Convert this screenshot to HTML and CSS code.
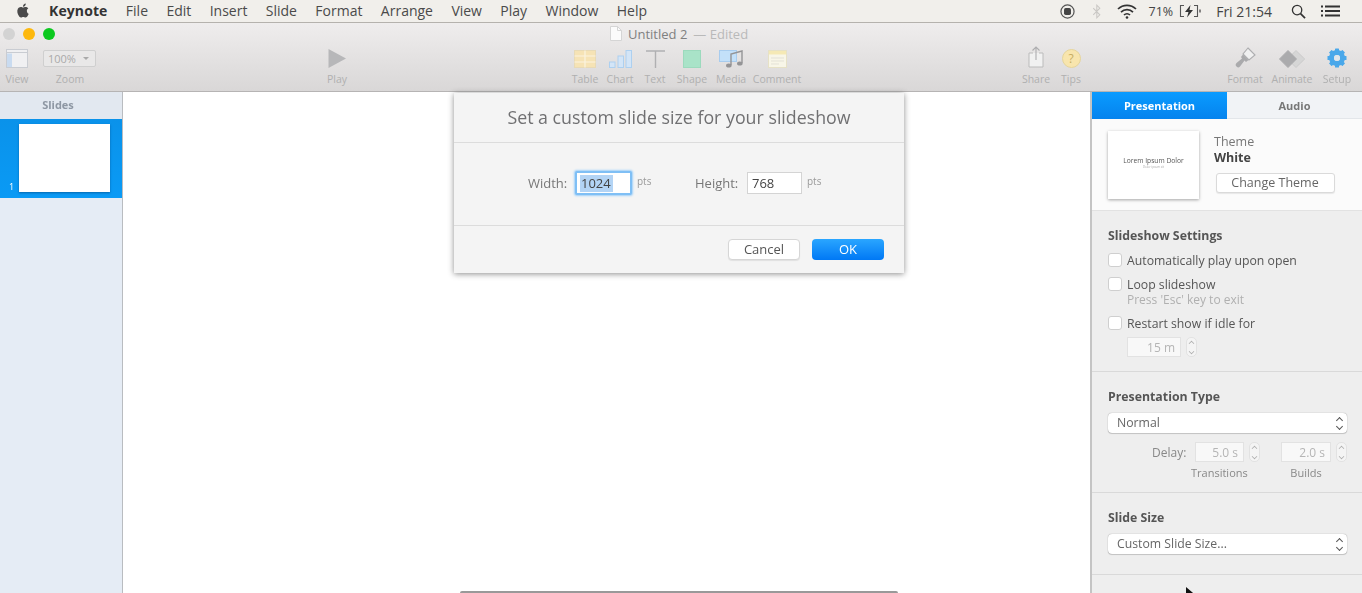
FILE: index.html
```html
<!DOCTYPE html>
<html lang="en">
<head>
<meta charset="utf-8">
<title>Keynote</title>
<link rel="stylesheet" href="styles.css">
</head>
<body>
<div class="screen">
  <header class="menubar">
    <svg class="apple" viewBox="0 0 24 24"><path d="M12.152 6.896c-.948 0-2.415-1.078-3.96-1.04-2.04.027-3.91 1.183-4.961 3.014-2.117 3.675-.546 9.103 1.519 12.09 1.013 1.454 2.208 3.09 3.792 3.039 1.52-.065 2.09-.987 3.935-.987 1.831 0 2.35.987 3.96.948 1.637-.026 2.676-1.48 3.676-2.948 1.156-1.688 1.636-3.325 1.662-3.415-.039-.013-3.182-1.221-3.22-4.857-.026-3.04 2.48-4.494 2.597-4.559-1.429-2.09-3.623-2.324-4.39-2.376-2-.156-3.675 1.09-4.61 1.09zM15.53 3.83c.843-1.012 1.4-2.427 1.245-3.83-1.207.052-2.662.805-3.532 1.818-.78.896-1.454 2.338-1.273 3.714 1.338.104 2.715-.688 3.559-1.701"/></svg>
    <nav class="menu">
      <span class="menu-app">Keynote</span><span>File</span><span>Edit</span><span>Insert</span><span>Slide</span><span>Format</span><span>Arrange</span><span>View</span><span>Play</span><span>Window</span><span>Help</span>
    </nav>
    <div class="status">
      <svg class="st-record" viewBox="0 0 16 16"><circle cx="8" cy="8" r="7" fill="none" stroke="#555" stroke-width="1.300"/><rect x="4.300" y="4.300" width="7.400" height="7.400" rx="1.800" fill="#444"/></svg>
      <svg class="st-bt" viewBox="0 0 10 16"><path d="M1 4.500l7 7-3.200 3.200V1.300L8 4.500l-7 7" fill="none" stroke="#c9c7c4" stroke-width="1.100"/></svg>
      <svg class="st-wifi" viewBox="0 0 20 15"><g fill="none" stroke="#333" stroke-width="1.700"><path d="M1 5a13 13 0 0 1 18 0"/><path d="M4 8.200a8.500 8.500 0 0 1 12 0"/><path d="M7 11a4.200 4.200 0 0 1 6 0"/></g><circle cx="10" cy="13.500" r="1.300" fill="#333"/></svg>
      <span class="st-pct">71%</span>
      <svg class="st-batt" viewBox="0 0 22 14"><path d="M5 1.500H1.500v11H5M15 1.500h3.500v11H15" fill="none" stroke="#555" stroke-width="1.100"/><path d="M21 5.500v3" stroke="#555" stroke-width="1.400"/><path d="M11.500 1L6 8h3.500l-1.500 5.500L14 6h-3.500z" fill="#333"/></svg>
      <span class="st-time">Fri 21:54</span>
      <svg class="st-search" viewBox="0 0 16 16"><circle cx="6.500" cy="6.500" r="5" fill="none" stroke="#333" stroke-width="1.400"/><path d="M10.200 10.200L15 15" stroke="#333" stroke-width="1.800"/></svg>
      <svg class="st-list" viewBox="0 0 19 12"><g fill="#333"><rect x="0" y="0.500" width="2" height="2"/><rect x="0" y="5" width="2" height="2"/><rect x="0" y="9.500" width="2" height="2"/><rect x="4" y="0.500" width="15" height="2"/><rect x="4" y="5" width="15" height="2"/><rect x="4" y="9.500" width="15" height="2"/></g></svg>
    </div>
  </header>

  <section class="toolbar">
    <div class="titlerow">
      <div class="lights"><i class="light l-off"></i><i class="light l-min"></i><i class="light l-max"></i></div>
      <div class="doc">
        <svg class="doc-icon" viewBox="0 0 12 15"><path d="M.5.500h7l4 4v10H.5z" fill="#fbfbfb" stroke="#d5d5d5"/><path d="M7.500.500v4h4" fill="none" stroke="#d5d5d5"/></svg>
        <span class="doc-name">Untitled 2</span><span class="doc-state">— Edited</span>
      </div>
    </div>
    <div class="tools">
      <div class="tool w-view">
        <svg class="ico" width="22" height="19" viewBox="0 0 22 19"><rect x=".5" y=".5" width="21" height="18" fill="#f0f0f2" stroke="#c9ccd2"/><rect x="1" y="4.500" width="5" height="13.500" fill="#c9dbf0"/><path d="M1 3.500h20" stroke="#c9ccd2"/></svg>
        <span>View</span>
      </div>
      <div class="tool w-zoom">
        <div class="zoombox"><span class="zoomval">100%</span><i class="zoomcaret"></i></div>
        <span>Zoom</span>
      </div>
      <div class="tool w-play">
        <svg class="ico" width="18" height="19" viewBox="0 0 18 19"><path d="M.5 0L18 9.500.5 19z" fill="#b7b7b9"/></svg>
        <span>Play</span>
      </div>
      <div class="tool w-table">
        <svg class="ico" width="22" height="18" viewBox="0 0 22 18"><rect x=".5" y=".5" width="21" height="17" fill="#f6e3b5" stroke="#e8dab6"/><path d="M.5 6h21M.5 12h21M11 .5v17" stroke="#fbf3df" stroke-width="1.200"/></svg>
        <span>Table</span>
      </div>
      <div class="tool w-chart">
        <svg class="ico" width="23" height="18" viewBox="0 0 23 18"><g fill="#d3e5f7" stroke="#add0f0"><rect x=".5" y="12" width="5.500" height="5.500"/><rect x="9" y="6" width="5.500" height="11.500"/><rect x="17" y=".5" width="5.500" height="17"/></g></svg>
        <span>Chart</span>
      </div>
      <div class="tool w-text">
        <svg class="ico" width="19" height="18" viewBox="0 0 19 18"><path d="M0 1h19M9.500 1v17" fill="none" stroke="#b0b0b2" stroke-width="1.400"/></svg>
        <span>Text</span>
      </div>
      <div class="tool w-shape">
        <svg class="ico" width="18" height="18" viewBox="0 0 18 18"><rect x=".5" y=".5" width="17" height="17" fill="#a9e3c8" stroke="#9cdabd"/></svg>
        <span>Shape</span>
      </div>
      <div class="tool w-media">
        <svg class="ico" width="25" height="18" viewBox="0 0 25 18"><rect x=".5" y=".5" width="17" height="11" fill="#c3e0f9" stroke="#a8ccee"/><path d="M12 15V4l11-3v12" fill="none" stroke="#949496" stroke-width="1.400"/><ellipse cx="9.800" cy="15.500" rx="2.800" ry="2" fill="#949496"/><ellipse cx="20.800" cy="13.500" rx="2.800" ry="2" fill="#949496"/></svg>
        <span>Media</span>
      </div>
      <div class="tool w-comment">
        <svg class="ico" width="19" height="18" viewBox="0 0 19 18"><rect x=".5" y=".5" width="18" height="17" fill="#f8f6e8" stroke="#e6e1c6"/><rect x="1" y="1" width="17" height="3.500" fill="#f5e9b5"/><path d="M3 8h13M3 11h13M3 14h8" stroke="#e3e1d6"/></svg>
        <span>Comment</span>
      </div>
      <div class="tool w-share">
        <svg class="ico" width="16" height="22" viewBox="0 0 16 22"><path d="M5 7H1v14h14V7h-4" fill="#f1f1f1" stroke="#bbb"/><path d="M8 14V1M4.500 4.500L8 1l3.500 3.500" fill="none" stroke="#adadaf" stroke-width="1.100"/></svg>
        <span>Share</span>
      </div>
      <div class="tool w-tips">
        <div class="tipsdot">?</div>
        <span>Tips</span>
      </div>
      <div class="tool w-format">
        <svg class="ico" width="21" height="21" viewBox="0 0 21 21"><path d="M13 1l7 7-6 5-6-6z" fill="#f0f0f0" stroke="#aeaeb0" stroke-width="1.100"/><path d="M8 7.500l5.500 5.500-2.500 2-1.500-1.500L5 19.500a2 2 0 0 1-3.500-3.500L7 11.500 6 10z" fill="#aaaaac"/></svg>
        <span>Format</span>
      </div>
      <div class="tool w-animate">
        <svg class="ico" width="28" height="18" viewBox="0 0 28 18"><path d="M18 .5L26.700 9 18 17.500 9.300 9z" fill="#d6d6d6" stroke="#c8c8c8" stroke-width=".8" stroke-linejoin="round"/><path d="M10 .5L18.500 9 10 17.500 1.500 9z" fill="#ababad" stroke="#ababad" stroke-linejoin="round"/></svg>
        <span>Animate</span>
      </div>
      <div class="tool w-setup">
        <svg class="ico" width="20" height="20" viewBox="0 0 20 20"><g fill="#4aa8ea"><circle cx="10" cy="10" r="5.500" fill="none" stroke="#4aa8ea" stroke-width="5"/><rect x="8" y="0.500" width="4" height="4" rx=".6"/><rect x="8" y="15.500" width="4" height="4" rx=".6"/><rect x="0.500" y="8" width="4" height="4" rx=".6"/><rect x="15.500" y="8" width="4" height="4" rx=".6"/><rect x="8" y="0.500" width="4" height="4" rx=".6" transform="rotate(45 10 10)"/><rect x="8" y="15.500" width="4" height="4" rx=".6" transform="rotate(45 10 10)"/><rect x="0.500" y="8" width="4" height="4" rx=".6" transform="rotate(45 10 10)"/><rect x="15.500" y="8" width="4" height="4" rx=".6" transform="rotate(45 10 10)"/></g><circle cx="10" cy="10" r="3" fill="#dfe6ec"/></svg>
        <span>Setup</span>
      </div>
    </div>
  </section>

  <main class="workspace">
    <aside class="slides">
      <div class="slides-head">Slides</div>
      <div class="slide-row"><span class="slide-num">1</span><div class="slide-thumb"></div></div>
    </aside>

    <section class="canvas">
      <div class="canvas-slide"></div>
      <div class="dialog">
        <h1 class="dialog-title">Set a custom slide size for your slideshow</h1>
        <div class="dialog-body">
          <label class="dlg-label">Width:</label>
          <div class="dlg-input focused"><span class="sel">1024</span></div>
          <span class="pts">pts</span>
          <label class="dlg-label second">Height:</label>
          <div class="dlg-input plain">768</div>
          <span class="pts">pts</span>
        </div>
        <div class="dialog-foot">
          <button class="btn-cancel">Cancel</button>
          <button class="btn-ok">OK</button>
        </div>
      </div>
    </section>

    <aside class="inspector">
      <div class="tabs"><div class="tab active">Presentation</div><div class="tab">Audio</div></div>
      <div class="theme">
        <div class="theme-thumb"><span class="lorem">Lorem Ipsum Dolor</span><span class="lorem-sub">Dolor ipsum sit</span></div>
        <div class="theme-info">
          <div class="theme-label">Theme</div>
          <div class="theme-name">White</div>
          <button class="theme-btn">Change Theme</button>
        </div>
      </div>
      <div class="panel p-show">
        <h2>Slideshow Settings</h2>
        <div class="check"><i class="box"></i>Automatically play upon open</div>
        <div class="check"><i class="box"></i>Loop slideshow</div>
        <div class="hint">Press 'Esc' key to exit</div>
        <div class="check"><i class="box"></i>Restart show if idle for</div>
        <div class="idle"><div class="num n-idle">15 m</div><div class="stepper"><b></b><u></u></div></div>
      </div>
      <div class="panel p-type">
        <h2>Presentation Type</h2>
        <div class="select">Normal<span class="arrows"><b></b><u></u></span></div>
        <div class="delay">
          <span class="delay-label">Delay:</span>
          <div class="num n-del">5.0 s</div><div class="stepper"><b></b><u></u></div>
          <div class="num n-del n-b">2.0 s</div><div class="stepper"><b></b><u></u></div>
        </div>
        <div class="captions"><span class="cap-t">Transitions</span><span class="cap-b">Builds</span></div>
      </div>
      <div class="panel p-size">
        <h2>Slide Size</h2>
        <div class="select">Custom Slide Size...<span class="arrows"><b></b><u></u></span></div>
      </div>
    </aside>
  </main>
  <svg class="cursor" width="12" height="12" viewBox="0 0 12 12"><path d="M0 0v12l3-3 2.500 3h3L6 8.500h4z" fill="#111"/></svg>
</div>
</body>
</html>
```
FILE: styles.css
```css
* { box-sizing: border-box; }
html, body { margin: 0; padding: 0; height: 593px; overflow: hidden; background: #fff; }
.screen {
  position: relative; width: 1362px; height: 593px; overflow: hidden;
  font-family: "Open Sans", "Noto Sans", sans-serif; color: #444;
  filter: blur(0.5px);
  display: flex; flex-direction: column;
}
svg { display: block; flex: none; }

/* menu bar */
.menubar {
  height: 23px; flex: none; display: flex; align-items: center;
  background: #f1efeb; border-bottom: 1px solid #b5b2ad;
  font-size: 14px; color: #4a4a4a; padding-left: 16px;
}
.apple { width: 14px; height: 15px; fill: #4a4a4a; margin-top: -1px; }
.menu { display: flex; gap: 18.4px; margin-left: 19px; line-height: 22px; }
.menu-app { font-weight: 700; color: #333; letter-spacing: .1px; }
.status { margin-left: auto; display: flex; align-items: center; color: #444; padding-right: 22px; }
.st-record { width: 15px; height: 15px; }
.st-bt { width: 10px; height: 15px; margin-left: 17px; }
.st-wifi { width: 20px; height: 15px; margin-left: 15px; }
.st-pct { font-size: 12.5px; margin-left: 12px; }
.st-batt { width: 22px; height: 14px; margin-left: 6px; }
.st-time { font-size: 14px; margin-left: 15px; }
.st-search { width: 15px; height: 15px; margin-left: 19px; }
.st-list { width: 19px; height: 12px; margin-left: 15px; }

/* toolbar */
.toolbar {
  height: 69px; flex: none;
  background: linear-gradient(#efeded, #d9d7d7);
  border-bottom: 1px solid #b6b4b4;
}
.titlerow { height: 21px; display: flex; align-items: center; padding-left: 3px; }
.lights { display: flex; gap: 8px; }
.light { width: 12px; height: 12px; border-radius: 50%; display: block; }
.l-off { background: #d3d3d3; }
.l-min { background: #fdb80e; }
.l-max { background: #0cc91f; }
.doc { display: flex; align-items: center; margin-left: 555px; font-size: 13px; }
.doc-icon { width: 12px; height: 15px; margin-right: 6px; }
.doc-name { color: #808080; }
.doc-state { color: #b9b9b9; margin-left: 6px; }
.tools { display: flex; height: 47px; }
.tool {
  display: flex; flex-direction: column; align-items: center; justify-content: flex-end;
  font-size: 10.5px; color: #b0b0b0; height: 42px; flex: none;
}
.tool span { line-height: 14px; }
.ico { margin-bottom: 4px; }
.w-view { width: 34px; }
.w-zoom { width: 72px; }
.w-play { width: 40px; margin-left: 211px; }
.w-table { width: 35px; margin-left: 210.5px; }
.w-chart { width: 35px; }
.w-text { width: 35px; }
.w-shape { width: 39px; }
.w-media { width: 39px; }
.w-comment { width: 53px; }
.w-share { width: 36px; margin-left: 214.5px; }
.w-tips { width: 34px; }
.w-format { width: 47px; margin-left: 133.5px; }
.w-animate { width: 47px; }
.w-setup { width: 43px; }
.zoombox {
  width: 53px; height: 17px; margin: 0 1px 5px 0; border: 1px solid #cfcfcf; border-radius: 2px;
  display: flex; align-items: center; padding-left: 4px; font-size: 11px; color: #aaa; background: #e9e8e8;
}
.zoomcaret { margin-left: 7px; border: 3px solid transparent; border-top: 3px solid #aaa; border-bottom: 0; }
.tipsdot {
  width: 19px; height: 19px; border-radius: 50%; background: #f8e5ad; border: 1px solid #e6d59a;
  color: #c6ad62; font-size: 12px; text-align: center; line-height: 17px; margin-bottom: 4px;
}

/* workspace */
.workspace { flex: 1; display: flex; min-height: 0; }
.slides { width: 123px; flex: none; background: #e5ecf5; border-right: 1px solid #b9bcc0; }
.slides-head {
  height: 27px; background: #e2e8f0; color: #8e97a3; font-size: 11px; font-weight: 700;
  text-align: center; line-height: 26px; padding-right: 6px;
}
.slide-row {
  height: 79px; background: linear-gradient(#0a92ea, #0a9af5); padding: 5px 12px 0 19px; position: relative;
}
.slide-thumb { width: 91px; height: 68px; background: #fff; box-shadow: 0 1px 2px rgba(0,50,100,.5); }
.slide-num { position: absolute; left: 9px; top: 62px; color: #fff; font-size: 9px; line-height: 12px; }

.canvas { flex: 1; position: relative; background: #fff; }
.canvas-slide {
  position: absolute; left: 337px; top: 499px; width: 438px; height: 3px;
  background: #999; border-radius: 2px 2px 0 0;
}
.dialog {
  position: absolute; left: 331px; top: 1px; width: 450px; height: 180px;
  background: #f4f4f4; box-shadow: 0 1px 6px rgba(0,0,0,.45);
}
.dialog-title {
  margin: 0; height: 50px; border-bottom: 1px solid #dcdcdc; text-align: center;
  font-size: 17.8px; font-weight: 400; color: #707072; line-height: 48px;
}
.dialog-body {
  height: 83px; border-bottom: 1px solid #dcdcdc; display: flex; align-items: flex-start;
  padding: 28px 0 0 74px; font-size: 13px; color: #777;
}
.dlg-label { line-height: 24px; width: 47px; flex: none; }
.dlg-label.second { width: 52px; margin-left: 38px; }
.dlg-input {
  background: #fff; color: #444; font-size: 13px; display: flex; align-items: center; flex: none;
}
.dlg-input.focused {
  width: 57px; height: 24px; border: 2px solid #7fbff5; border-radius: 2px; padding-left: 3px;
  box-shadow: 0 0 2px 1px #9fd0f9;
}
.sel { background: #b3d4f5; padding: 0 2px 0 1px; line-height: 17px; }
.dlg-input.plain { width: 55px; height: 22px; margin-top: 1px; border: 1px solid #d4d4d4; padding-left: 4px; }
.pts { font-size: 10px; color: #999; width: 20px; margin-left: 5px; line-height: 20px; flex: none; }
.dialog-foot { display: flex; justify-content: flex-end; gap: 12px; padding: 13px 20px 0 0; }
.dialog-foot button { width: 72px; height: 21px; border-radius: 4px; font: 13px "Open Sans", sans-serif; padding: 0; line-height: 19px; }
.btn-cancel { background: #fff; border: 1px solid #d6d6d6; color: #555; box-shadow: 0 1px 1px rgba(0,0,0,.08); }
.btn-ok { background: linear-gradient(#2aa6ff, #0078f5); border: 0; color: #fff; }

/* inspector */
.inspector { width: 272px; flex: none; background: #eeeeee; border-left: 2px solid #c4c4c4; font-size: 12.25px; color: #555; }
.tabs { display: flex; height: 27px; background: #f1f3f6; border-bottom: 1px solid #e3e6ea; }
.tab { flex: 1; text-align: center; line-height: 27px; font-size: 11px; font-weight: 700; color: #777; }
.tab.active { flex: none; width: 135px; height: 27px; background: linear-gradient(#0a9bff, #0583ee); color: #fff; }
.theme { height: 92px; background: #fbfbfb; border-bottom: 1px solid #e2e2e2; display: flex; padding: 12px 0 0 16px; }
.theme-thumb {
  width: 91px; height: 68px; background: #fff; box-shadow: 0 1px 3px rgba(0,0,0,.35);
  display: flex; flex-direction: column; align-items: center; padding-top: 25px; flex: none;
}
.lorem { font-size: 6.7px; color: #555; line-height: 9px; white-space: nowrap; }
.lorem-sub { font-size: 3px; color: #aaa; line-height: 5px; }
.theme-info { margin-left: 15px; font-size: 12.5px; }
.theme-label { color: #777; line-height: 16px; margin-top: 3px; }
.theme-name { font-weight: 700; color: #444; line-height: 16px; }
.theme-btn {
  display: block; width: 119px; height: 20px; margin: 7px 0 0 1.500px; padding: 0;
  background: #fff; border: 1px solid #dadada; border-radius: 3px; color: #666;
  font: 12.5px "Open Sans", sans-serif; line-height: 18px; box-shadow: 0 1px 1px rgba(0,0,0,.08);
}
.panel { border-bottom: 1px solid #d9d9d9; padding-left: 16px; }
.panel h2 { margin: 0; font-size: 12.3px; font-weight: 700; color: #555; line-height: 16px; }
.p-show { height: 161px; padding-top: 17px; }
.p-type { height: 121px; padding-top: 17px; }
.p-size { height: 82px; padding-top: 17px; }
.check { display: flex; align-items: center; height: 16px; margin-top: 8px; color: #555; line-height: 15px; }
.box { display: block; width: 14px; height: 14px; margin-right: 5px; background: #fff; border: 1px solid #cfcfcf; border-radius: 3px; }
.hint { font-size: 12px; color: #b0b0b0; line-height: 14px; margin: 1px 0 -7px 19px; }
.hint + .check { margin-top: 15px; }
.idle { display: flex; align-items: center; margin: 6px 0 0 19px; }
.num {
  background: #f8f8f8; border: 1px solid #e2e2e2; height: 20px; text-align: right;
  color: #b5b5b5; padding-right: 5px; line-height: 20px; flex: none; font-size: 12px;
}
.n-idle { width: 54px; }
.stepper {
  width: 11px; height: 20px; margin-left: 5px; flex: none; background: #f4f4f4; border: 1px solid #e2e2e2; border-radius: 5px;
  display: flex; flex-direction: column; align-items: center; justify-content: center; gap: 3px;
}
.stepper b, .arrows b { display: block; width: 5px; height: 5px; border-left: 1px solid #aaa; border-top: 1px solid #aaa; transform: rotate(45deg) scale(.8); }
.stepper u, .arrows u { display: block; width: 5px; height: 5px; border-right: 1px solid #aaa; border-bottom: 1px solid #aaa; transform: rotate(45deg) scale(.8); }
.select {
  position: relative; width: 239px; height: 20px; margin-top: 8px; background: #fff; border-radius: 4px;
  box-shadow: 0 0 1px rgba(0,0,0,.45), 0 1px 1px rgba(0,0,0,.15); padding-left: 9px; line-height: 19px; color: #666;
}
.arrows { position: absolute; right: 4px; top: 5px; display: flex; flex-direction: column; align-items: center; gap: 1px; width: 8px; }
.arrows b, .arrows u { border-color: #555; transform: rotate(45deg); }
.delay { display: flex; align-items: center; margin-top: 9px; }
.delay-label { width: 36px; margin-left: 44px; color: #888; flex: none; font-size: 12px; }
.n-del { width: 49px; margin-left: 7px; }
.n-b { width: 50px; margin-left: 21px; }
.captions { display: flex; font-size: 11px; color: #888; line-height: 14px; margin-top: 4px; }
.cap-t { width: 56px; margin-left: 83px; text-align: center; }
.cap-b { width: 40px; margin-left: 39px; text-align: center; }
.cursor { position: absolute; left: 1186px; top: 587px; }
```
